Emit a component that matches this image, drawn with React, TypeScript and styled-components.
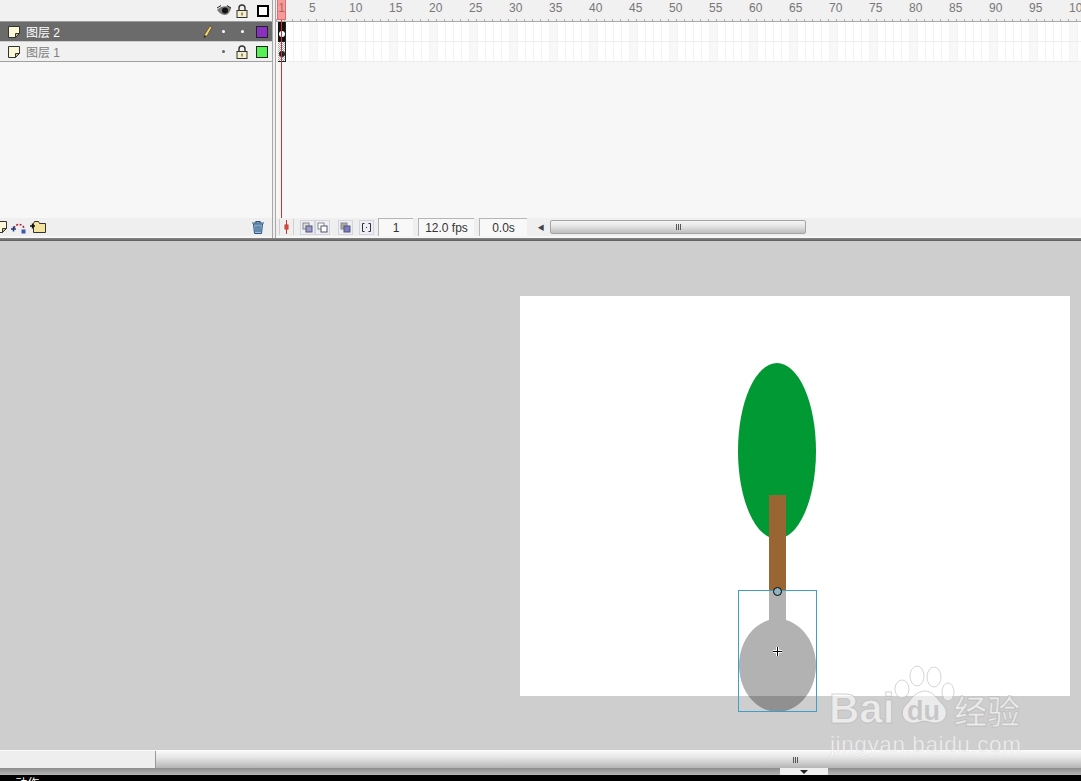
import styled, { createGlobalStyle } from 'styled-components';

const GlobalStyle = createGlobalStyle`
  html, body {
    margin: 0;
    padding: 0;
    background: #000;
    overflow: hidden;
  }
`;

const Root = styled.div`
  position: relative;
  width: 1081px;
  height: 781px;
  display: flex;
  flex-direction: column;
  overflow: hidden;
  font-family: 'Liberation Sans', 'Noto Sans CJK SC', sans-serif;
`;

const Timeline = styled.div`
  position: relative;
  height: 238px;
  display: flex;
  background: #f7f7f7;
  flex-shrink: 0;
`;

const LayerPane = styled.div`
  width: 272px;
  display: flex;
  flex-direction: column;
  flex-shrink: 0;
`;

const LayerHeader = styled.div`
  height: 22px;
  display: flex;
  align-items: center;
  justify-content: flex-end;
  gap: 4px;
  padding-right: 3px;
  box-sizing: border-box;
  background: #f1f1f1;
  border-bottom: 1px solid #9c9c9c;
`;

const LayerRow = styled.div<{ $active?: boolean }>`
  height: 19px;
  box-sizing: content-box;
  display: flex;
  align-items: center;
  padding-left: 7px;
  background: ${(p) => (p.$active ? '#6b6b6b' : '#f1f1f1')};
  color: ${(p) => (p.$active ? '#fff' : '#808080')};
  border-bottom: 1px solid ${(p) => (p.$active ? '#cfcfcf' : '#a0a0a0')};
  font-size: 12px;
`;

const LayerName = styled.span`
  margin-left: 5px;
  flex: 1;
  white-space: pre;
`;

const RowSlot = styled.span<{ $w: number }>`
  width: ${(p) => p.$w}px;
  display: flex;
  align-items: center;
  justify-content: center;
  flex-shrink: 0;
`;

const Dot = styled.span<{ $light?: boolean }>`
  width: 3px;
  height: 3px;
  border-radius: 50%;
  background: ${(p) => (p.$light ? '#fff' : '#666')};
`;

const ColorSwatch = styled.span<{ $color: string }>`
  width: 10px;
  height: 10px;
  background: ${(p) => p.$color};
  border: 1px solid #222;
`;

const Spacer = styled.div`
  flex: 1;
`;

const LayerFooter = styled.div`
  height: 18px;
  display: flex;
  align-items: center;
  margin-left: -6px;
  padding-right: 7px;
  gap: 3px;
  background: #efefef;
  margin-bottom: 2px;
`;

const Divider = styled.div`
  width: 4px;
  flex-shrink: 0;
  background: #f0f0f0;
  border-left: 1px solid #a8a8a8;
  border-right: 1px solid #a8a8a8;
  box-sizing: border-box;
`;

const FramePane = styled.div`
  flex: 1;
  min-width: 0;
  display: flex;
  flex-direction: column;
`;

const Ruler = styled.div`
  position: relative;
  height: 22px;
  display: flex;
  padding-left: 33px;
  box-sizing: border-box;
  overflow: hidden;
  background: #f1f1f1;
  border-bottom: 1px solid #a8a8a8;

  &::after {
    content: '';
    position: absolute;
    left: 0;
    right: 0;
    bottom: 0;
    height: 2px;
    background: repeating-linear-gradient(to right, #aaa 0 1px, transparent 1px 8px);
  }
`;

const RulerLabel = styled.span`
  width: 40px;
  flex-shrink: 0;
  font-size: 12px;
  line-height: 16px;
  color: #777;
`;

const FrameRow = styled.div`
  height: 20px;
  display: flex;
  background-color: #fff;
  background-image: repeating-linear-gradient(to right, #f3f3f3 0 1px, transparent 1px 8px),
    linear-gradient(to right, transparent 32px, #f8f8f8 32px, #f8f8f8 40px);
  background-size: 8px 100%, 40px 100%;
  background-position: 1px 0, 1px 0;
  box-sizing: border-box;
  border-bottom: 1px solid #eeeeee;
`;

const Keyframe = styled.div<{ $solid?: boolean }>`
  width: 8px;
  margin-left: 2px;
  display: flex;
  align-items: flex-end;
  justify-content: center;
  padding-bottom: 4px;
  box-sizing: border-box;
  background: ${(p) =>
    p.$solid
      ? '#111'
      : 'repeating-conic-gradient(#aaa 0 25%, #fff 0 50%) 0 0 / 2px 2px'};
  border-right: 1px solid #222;
  border-bottom: 1px solid #222;
  margin-bottom: -1px;
`;

const KeyDot = styled.span<{ $light?: boolean }>`
  width: 6px;
  height: 6px;
  border-radius: 50%;
  background: ${(p) => (p.$light ? '#fff' : '#222')};
`;

const StatusBar = styled.div`
  height: 18px;
  margin-bottom: 2px;
  display: flex;
  align-items: center;
  background: #efefef;
  font-size: 12px;
  color: #333;
`;

const StatusIcons = styled.div`
  display: flex;
  align-items: center;
  width: 102px;
  flex-shrink: 0;
  padding-left: 2px;
  box-sizing: border-box;
`;

const IconBox = styled.span<{ $ml?: number }>`
  display: flex;
  margin-left: ${(p) => p.$ml ?? 0}px;
`;

const StatusField = styled.div<{ $w: number }>`
  width: ${(p) => p.$w}px;
  height: 18px;
  margin-right: 5px;
  flex-shrink: 0;
  box-sizing: border-box;
  display: flex;
  align-items: center;
  justify-content: center;
  background: #f8f8f8;
  border-left: 1px solid #b5b5b5;
  border-top: 1px solid #b5b5b5;
`;

const ScrollArrow = styled.span`
  width: 18px;
  display: flex;
  justify-content: center;
  color: #444;
  font-size: 7px;
`;

const ScrollThumb = styled.div<{ $w?: number }>`
  display: flex;
  align-items: center;
  justify-content: center;
  height: 14px;
  box-sizing: border-box;
  ${(p) => (p.$w ? `width: ${p.$w}px;` : 'flex: 1;')}
  border: 1px solid #a4a4a4;
  border-radius: 2px;
  background: linear-gradient(to bottom, #f6f6f6 0%, #e4e4e4 45%, #bdbdbd 100%);
`;

const Grip = styled.span`
  width: 5px;
  height: 6px;
  background: repeating-linear-gradient(to right, #555 0 1px, transparent 1px 2px);
`;

const Playhead = styled.div`
  position: absolute;
  left: 277px;
  top: 0;
  width: 9px;
  height: 218px;
  pointer-events: none;

  &::before {
    content: '1';
    position: absolute;
    inset: 0 0 auto 0;
    height: 20px;
    background: #f79a9a;
    border: 1px solid #e56a6a;
    border-top: none;
    box-sizing: border-box;
    color: #a66;
    font-size: 12px;
    line-height: 17px;
    text-align: center;
  }

  &::after {
    content: '';
    position: absolute;
    left: 4px;
    top: 20px;
    bottom: 0;
    width: 1px;
    background: #d0312f;
  }
`;

const Rule = styled.div`
  height: 3px;
  flex-shrink: 0;
  background: linear-gradient(to bottom, #8a8a8a, #5c5c5c);
`;

const Canvas = styled.div`
  position: relative;
  height: 509px;
  flex-shrink: 0;
  background: #cecece;
  overflow: hidden;
`;

const Stage = styled.div`
  position: absolute;
  left: 520px;
  top: 55px;
  width: 550px;
  height: 400px;
  background: #fff;
`;

const Art = styled.svg`
  position: absolute;
  left: 0;
  top: 0;
`;

const BottomScroll = styled.div`
  height: 18px;
  flex-shrink: 0;
  display: flex;
  align-items: stretch;
  background: #eeeeee;
  border-top: 1px solid #fafafa;
  box-sizing: border-box;
`;

const BottomTrack = styled.div`
  width: 155px;
  flex-shrink: 0;
`;

const BottomThumb = styled.div`
  flex: 1;
  display: flex;
  align-items: center;
  justify-content: center;
  padding-left: 354px;
  border-left: 1px solid #999;
  background: linear-gradient(to bottom, #f8f8f8 0%, #e4e4e4 40%, #b5b5b5 100%);
`;

const Dock = styled.div`
  height: 7px;
  flex-shrink: 0;
  display: flex;
  justify-content: flex-end;
  padding-right: 253px;
  background: linear-gradient(to bottom, #8c8c8c, #b5b5b5);
`;

const DockTab = styled.div`
  width: 48px;
  display: flex;
  justify-content: center;
  background: #eeeeee;
`;

const DockArrow = styled.span`
  width: 0;
  height: 0;
  margin-top: 2px;
  border-left: 4px solid transparent;
  border-right: 4px solid transparent;
  border-top: 4px solid #222;
`;

const ActionsBar = styled.div`
  height: 6px;
  flex-shrink: 0;
  background: #000;
  color: #fff;
  font-size: 12px;
  line-height: 16px;
  padding-left: 6px;
  padding-top: 1px;
  box-sizing: border-box;
  overflow: hidden;
  white-space: pre;
`;

const Watermark = styled.div`
  position: absolute;
  left: 830px;
  top: 665px;
  width: 200px;
  height: 95px;
  pointer-events: none;
`;

const WatermarkMark = styled.svg`
  position: absolute;
  left: 60px;
  top: 0;
`;

const WatermarkBai = styled.span`
  position: absolute;
  left: -1px;
  top: 22px;
  font-size: 42px;
  line-height: 44px;
  font-weight: 700;
  color: rgba(255, 255, 255, 0.6);
  -webkit-text-stroke: 1px rgba(170, 170, 170, 0.5);
`;

const WatermarkDu = styled.span`
  position: absolute;
  left: 77px;
  top: 31px;
  font-size: 27px;
  line-height: 30px;
  font-weight: 700;
  color: rgba(190, 190, 190, 0.8);
`;

const WatermarkCn = styled.span`
  position: absolute;
  left: 124px;
  top: 25px;
  font-family: 'Noto Sans CJK SC', sans-serif;
  font-size: 33px;
  line-height: 40px;
  font-weight: 500;
  color: rgba(255, 255, 255, 0.6);
  -webkit-text-stroke: 1px rgba(170, 170, 170, 0.5);
  white-space: nowrap;
`;

const WatermarkUrl = styled.span`
  position: absolute;
  left: 0;
  top: 67px;
  font-size: 22.5px;
  line-height: 26px;
  letter-spacing: 0.6px;
  color: rgba(255, 255, 255, 0.65);
  -webkit-text-stroke: 0.5px rgba(170, 170, 170, 0.3);
  white-space: nowrap;
`;

const PageIcon = () => (
  <svg width="14" height="14" viewBox="0 0 14 14">
    <path d="M1.500 1.500h11v7l-4 4h-7z" fill="#fdf8d8" stroke="#333" />
    <path d="M12.500 8.500l-4 4v-4z" fill="#c9c08a" stroke="#333" />
  </svg>
);

const EyeIcon = () => (
  <svg width="16" height="11" viewBox="0 0 16 11">
    <path d="M1 5c3-4 10-5 14-2-1 4-3 7-6 7-4 0-6-3-8-5z" fill="#777" />
    <circle cx="9" cy="5.500" r="3" fill="#111" />
    <path d="M1 3l4-2.500M11 0.500l4 2.500" stroke="#222" fill="none" />
  </svg>
);

const LockIcon = () => (
  <svg width="12" height="14" viewBox="0 0 12 14">
    <path d="M3 7V4a3 3 0 0 1 6 0v3" fill="none" stroke="#333" strokeWidth="1.400" />
    <rect x="1" y="6.500" width="10" height="7" fill="#f6f0c8" stroke="#333" />
    <path d="M6 8.500v3" stroke="#333" />
  </svg>
);

const OutlineIcon = () => (
  <svg width="12" height="12" viewBox="0 0 12 12">
    <rect x="1" y="1" width="10" height="10" fill="#fff" stroke="#000" strokeWidth="2" />
  </svg>
);

const PencilIcon = () => (
  <svg width="10" height="14" viewBox="0 0 10 14">
    <path d="M7 1l2 1-5 9-3 2 .5-3.500z" fill="#f3d77a" stroke="#5a4a20" strokeWidth="0.800" />
    <path d="M1 13l.5-3 2 1z" fill="#222" />
  </svg>
);

const GuideIcon = () => (
  <svg width="16" height="14" viewBox="0 0 16 14">
    <path d="M3 8a5.500 6 0 0 1 10 0" fill="none" stroke="#b02040" strokeWidth="1.500" strokeDasharray="2 1.500" />
    <path d="M0 9h5M2.500 6.500v5" stroke="#223a80" strokeWidth="1.500" />
    <rect x="10.500" y="9.500" width="4" height="4" fill="#3a5ab0" />
  </svg>
);

const FolderIcon = () => (
  <svg width="16" height="14" viewBox="0 0 16 14">
    <path d="M3.500 3.500l1-2h4l1 2h6v9h-12z" fill="#f4e39c" stroke="#333" />
    <path d="M0 6h5M2.500 3.500v5" stroke="#111" strokeWidth="1.300" />
  </svg>
);

const TrashIcon = () => (
  <svg width="14" height="14" viewBox="0 0 14 14">
    <path d="M1 3h12M5 3V1.500h4V3" fill="none" stroke="#2d5480" strokeWidth="1.200" />
    <path d="M2.500 4h9l-1 9.500h-7z" fill="#9fc0dc" stroke="#2d5480" />
    <path d="M5 5.500v6.500M7 5.500v6.500M9 5.500v6.500" stroke="#2d5480" />
  </svg>
);

const CenterIcon = () => (
  <svg width="16" height="18" viewBox="0 0 16 18">
    <path d="M1.500 1v16M15.500 1v16" stroke="#cfcfcf" />
    <path d="M8.500 2v14" stroke="#c0392b" />
    <rect x="7" y="7" width="3" height="4" fill="#e05050" stroke="#c0392b" />
  </svg>
);

const OnionIcon = ({ front, back }: { front: string; back: string }) => (
  <svg width="15" height="15" viewBox="0 0 15 15">
    <rect x="0.500" y="0.500" width="14" height="14" fill="#eeeef6" stroke="#d4d4dc" />
    <rect x="3" y="3" width="6" height="6" fill={back} stroke="#888" />
    <rect x="6" y="6" width="6" height="6" fill={front} stroke="#556" />
  </svg>
);

const MarkersIcon = () => (
  <svg width="15" height="15" viewBox="0 0 15 15">
    <rect x="0.500" y="0.500" width="14" height="14" fill="#eeeef6" stroke="#d4d4dc" />
    <path d="M5.500 3.500h-2v8h2M9.500 3.500h2v8h-2" fill="none" stroke="#333" />
    <path d="M7.500 7v1" stroke="#333" />
  </svg>
);

const rulerLabels = Array.from({ length: 20 }, (_, i) => (i + 1) * 5);

function App() {
  return (
    <Root>
      <GlobalStyle />
      <Timeline>
        <LayerPane>
          <LayerHeader>
            <EyeIcon />
            <LockIcon />
            <IconBox $ml={5}>
              <OutlineIcon />
            </IconBox>
          </LayerHeader>
          <LayerRow $active>
            <PageIcon />
            <LayerName>图层 2</LayerName>
            <RowSlot $w={12}>
              <PencilIcon />
            </RowSlot>
            <RowSlot $w={18}>
              <Dot $light />
            </RowSlot>
            <RowSlot $w={20}>
              <Dot $light />
            </RowSlot>
            <RowSlot $w={20}>
              <ColorSwatch $color="#8a2fc0" />
            </RowSlot>
          </LayerRow>
          <LayerRow>
            <PageIcon />
            <LayerName>图层 1</LayerName>
            <RowSlot $w={18}>
              <Dot />
            </RowSlot>
            <RowSlot $w={20}>
              <LockIcon />
            </RowSlot>
            <RowSlot $w={20}>
              <ColorSwatch $color="#55f055" />
            </RowSlot>
          </LayerRow>
          <Spacer />
          <LayerFooter>
            <PageIcon />
            <GuideIcon />
            <FolderIcon />
            <Spacer />
            <TrashIcon />
          </LayerFooter>
        </LayerPane>
        <Divider />
        <FramePane>
          <Ruler>
            {rulerLabels.map((n) => (
              <RulerLabel key={n}>{n}</RulerLabel>
            ))}
          </Ruler>
          <FrameRow>
            <Keyframe $solid>
              <KeyDot $light />
            </Keyframe>
          </FrameRow>
          <FrameRow>
            <Keyframe>
              <KeyDot />
            </Keyframe>
          </FrameRow>
          <Spacer />
          <StatusBar>
            <StatusIcons>
              <CenterIcon />
              <IconBox $ml={6}>
                <OnionIcon front="#9a9ad0" back="#ddd" />
              </IconBox>
              <IconBox>
                <OnionIcon front="#fff" back="#fff" />
              </IconBox>
              <IconBox $ml={8}>
                <OnionIcon front="#7a7ac8" back="#aaa" />
              </IconBox>
              <IconBox $ml={6}>
                <MarkersIcon />
              </IconBox>
            </StatusIcons>
            <StatusField $w={35}>1</StatusField>
            <StatusField $w={56}>12.0 fps</StatusField>
            <StatusField $w={48}>0.0s</StatusField>
            <ScrollArrow>◀</ScrollArrow>
            <ScrollThumb $w={256}>
              <Grip />
            </ScrollThumb>
          </StatusBar>
        </FramePane>
        <Playhead />
      </Timeline>
      <Rule />
      <Canvas>
        <Stage />
        <Art width="1081" height="509" viewBox="0 241 1081 509">
          <ellipse cx="777" cy="451" rx="39" ry="88" fill="#009933" />
          <rect x="769" y="495" width="17" height="96" fill="#996633" />
          <path
            d="M769 590H786V620.100A38.500 46.500 0 1 1 769 620.100Z"
            fill="#000"
            fillOpacity="0.3"
          />
          <rect x="738.500" y="590.500" width="78" height="121" fill="none" stroke="#3f9fc4" />
          <circle cx="777.500" cy="591.500" r="4" fill="#8fb4c4" stroke="#000" />
          <path d="M773 651.500h9M777.500 647v9" stroke="#fff" strokeWidth="3" />
          <path d="M773 651.500h9M777.500 647v9" stroke="#000" />
        </Art>
      </Canvas>
      <BottomScroll>
        <BottomTrack />
        <BottomThumb>
          <Grip />
        </BottomThumb>
      </BottomScroll>
      <Dock>
        <DockTab>
          <DockArrow />
        </DockTab>
      </Dock>
      <ActionsBar>▸ 动作</ActionsBar>
      <Watermark>
        <WatermarkMark width="80" height="60" viewBox="0 0 80 60">
          <g fill="rgba(255,255,255,0.6)" stroke="rgba(170,170,170,0.5)">
            <ellipse cx="12" cy="24" rx="7" ry="9" />
            <ellipse cx="27" cy="11" rx="7" ry="10" />
            <ellipse cx="44" cy="12" rx="7" ry="10" />
            <ellipse cx="58" cy="27" rx="6" ry="9" />
            <path d="M35 26c8 0 12 8 18 14 7 8 2 18-8 18-4 0-7-2-11-2s-7 3-13 2c-9-2-11-11-6-17 6-6 10-15 20-15z" />
          </g>
        </WatermarkMark>
        <WatermarkBai>Bai</WatermarkBai>
        <WatermarkDu>du</WatermarkDu>
        <WatermarkCn>经验</WatermarkCn>
        <WatermarkUrl>jingyan.baidu.com</WatermarkUrl>
      </Watermark>
    </Root>
  );
}

export default App;
